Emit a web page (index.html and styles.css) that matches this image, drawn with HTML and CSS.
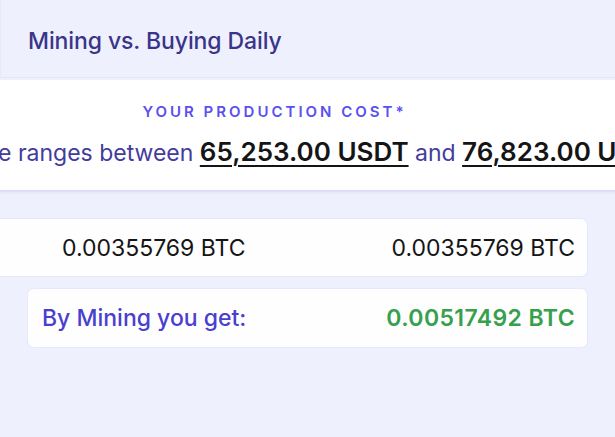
FILE: index.html
```html
<!DOCTYPE html>
<html lang="en">
<head>
<meta charset="utf-8">
<link rel="stylesheet" href="styles.css">
</head>
<body>
<div class="page">
  <header class="head">
    <h1 class="title">Mining vs. Buying Daily</h1>
  </header>
  <section class="cost">
    <div class="cost-label">YOUR PRODUCTION COST*</div>
    <div class="cost-line">e ranges between <span class="num">65,253.00 USDT</span> and <span class="num">76,823.00 USDT</span></div>
  </section>
  <section class="rows">
    <div class="row row-plain">
      <span class="val">0.00355769 BTC</span>
      <span class="val val-right">0.00355769 BTC</span>
    </div>
    <div class="row row-result">
      <span class="res-label">By Mining you get:</span>
      <span class="res-val">0.00517492 BTC</span>
    </div>
  </section>
</div>
</body>
</html>
```
FILE: styles.css
```css
* { box-sizing: border-box; }
html, body { margin: 0; padding: 0; }
body {
  background: #eef0fd;
  font-family: Inter, "Noto Sans", sans-serif;
  overflow: hidden;
  width: 615px;
  height: 437px;
}
.page { width: 615px; }
.head {
  height: 78px;
  display: flex;
  align-items: center;
  padding: 4px 0 0 27px;
  border-bottom: 1px solid #e5e7f8;
  border-left: 1px solid #e8eaf8;
}
.title {
  margin: 0;
  font-size: 23px;
  font-weight: 500;
  color: #3a3588;
  letter-spacing: -0.1px;
}
.cost {
  margin: 2px 0 0 -100px;
  width: 746px;
  height: 110px;
  background: #ffffff;
  box-shadow: 0 2px 3px rgba(110, 110, 210, 0.18);
  display: flex;
  flex-direction: column;
  padding-top: 22px;
}
.cost-label {
  text-align: center;
  font-size: 15px;
  font-weight: 600;
  letter-spacing: 3px;
  color: #5a4ff0;
  padding-left: 3px;
  line-height: 20px;
}
.cost-line {
  margin-top: 14px;
  padding-left: 98px;
  white-space: nowrap;
  font-size: 23px;
  line-height: 32px;
  color: #433c9c;
}
.num {
  font-size: 26px;
  color: #151515;
  font-weight: 600;
  text-decoration: underline;
  text-underline-offset: 4px;
  text-decoration-thickness: 2px;
}
.rows {
  padding: 28px 27px 0 0;
  display: flex;
  flex-direction: column;
  gap: 11px;
}
.row {
  height: 59px;
  background: #fefeff;
  border: 1px solid #e6e8fb;
  border-radius: 7px;
  display: flex;
  align-items: center;
  justify-content: space-between;
  padding: 0 12px 0 14px;
  font-size: 23px;
}
.row-plain {
  margin-left: -20px;
  padding-left: 81px;
}
.row-result {
  margin-left: 27px;
  height: 60px;
}
.val { color: #151515; }
.res-label { color: #4a3fce; font-weight: 500; }
.res-val { color: #37a04c; font-weight: 600; letter-spacing: 0.4px; }
```
